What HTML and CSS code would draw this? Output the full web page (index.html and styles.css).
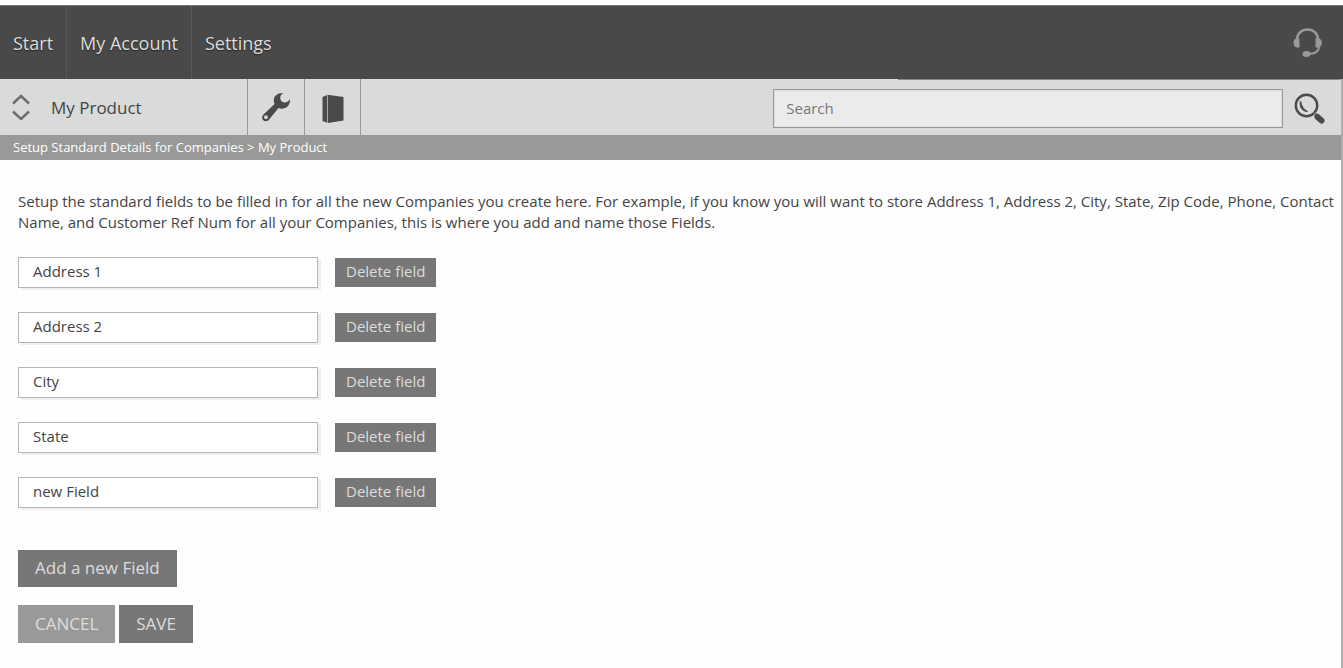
FILE: index.html
```html
<!DOCTYPE html>
<html lang="en">
<head>
    <meta charset="UTF-8">
    <meta name="viewport" content="width=device-width, initial-scale=1.0">
    <title>Setup Standard Details for Companies</title>
    <link rel="stylesheet" href="styles.css">
</head>
<body>
    <header class="top-bar">
        <nav class="main-nav">
            <a href="#start">Start</a>
            <a href="#account">My Account</a>
            <a href="#settings">Settings</a>
        </nav>
        <a href="#support" class="support" aria-label="Support">
            <svg width="30" height="30" viewBox="0 0 30 30" fill="none" stroke="#999">
                <path d="M4 12C4 5 9 1.500 14.500 1.500S25 5 25 12" stroke-width="2.600"/>
                <path d="M3 10.500h3.500v9H4.500C2 19.500.5 17.500.5 15S1.500 11 3 10.500zM26 10.500h-3.500v9h2c2.500 0 4.500-2 4.500-4.500s-1.500-4-3-4.500z" fill="#999" stroke="none"/>
                <path d="M26 18c0 5-2.500 8-11 8" stroke-width="2"/>
                <ellipse cx="13.500" cy="26" rx="4" ry="3" fill="#999" stroke="none"/>
            </svg>
        </a>
    </header>

    <div class="page">
        <div class="toolbar">
            <button type="button" class="product">
                <svg width="18" height="26" viewBox="0 0 18 26" fill="none" stroke="#6d6d6d" stroke-width="2.500">
                    <path d="M1 9.500L9 2l8 7.500M1 17.500L9 25l8-7.500"/>
                </svg>
                My Product
            </button>
            <button type="button" class="tool" aria-label="Tools">
                <svg width="30" height="30" viewBox="0 0 30 30">
                    <path fill="#4a4a4a" fill-rule="evenodd" d="M22.500 1C17 .5 12.500 4 12.800 8.500c0 1.500.3 2.500.8 3.500L2.500 22.500C.5 24.500.8 27 2.300 28.300c1.500 1.400 4 1.300 5.600-.5L17.500 16c3.500 1.500 7 .5 9.500-2 1.500-1.700 2.200-4.500 2-7-1 1.800-2.500 3.300-4.500 3.500-3 .2-5.300-1.700-5.300-4.500 0-2.200 1.300-4.200 3.300-5zM5 23.300a1.900 1.900 0 1 1 0 3.800 1.900 1.900 0 0 1 0-3.800z"/>
                </svg>
            </button>
            <button type="button" class="tool book" aria-label="Products">
                <svg width="22" height="30" viewBox="0 0 22 30">
                    <path fill="#4a4a4a" d="M.5 3L5.500.8 21.500 3v23.500L6 29 .5 27z"/>
                    <path fill="none" stroke="#aaa" d="M5.500 1v28"/>
                </svg>
            </button>
            <form class="search">
                <input type="text" placeholder="Search" aria-label="Search">
                <button type="submit" aria-label="Search">
                    <svg width="32" height="32" viewBox="0 0 32 32" fill="none" stroke="#4a4a4a">
                        <circle cx="13.500" cy="13.500" r="10.700" stroke-width="2.400"/>
                        <path d="M7.500 9C6 14.500 9 19.500 14.500 19.500 10.500 17.500 8.500 14 7.500 9z" fill="#4a4a4a" stroke-width="1"/>
                        <path d="M21 21l2.500 2.500" stroke-width="3" stroke="#777"/>
                        <path d="M24.500 25l4 3.500" stroke-width="6" stroke-linecap="round"/>
                    </svg>
                </button>
            </form>
        </div>
        <div class="breadcrumb">Setup Standard Details for Companies &gt; My Product</div>

        <main class="content">
            <p>Setup the standard fields to be filled in for all the new Companies you create here. For example, if you know you will want to store Address 1, Address 2, City, State, Zip Code, Phone, Contact Name, and Customer Ref Num for all your Companies, this is where you add and name those Fields.</p>

            <form>
                <div class="fields">
                    <div class="field">
                        <input type="text" value="Address 1" aria-label="Field 1">
                        <button type="button">Delete field</button>
                    </div>
                    <div class="field">
                        <input type="text" value="Address 2" aria-label="Field 2">
                        <button type="button">Delete field</button>
                    </div>
                    <div class="field">
                        <input type="text" value="City" aria-label="Field 3">
                        <button type="button">Delete field</button>
                    </div>
                    <div class="field">
                        <input type="text" value="State" aria-label="Field 4">
                        <button type="button">Delete field</button>
                    </div>
                    <div class="field">
                        <input type="text" value="new Field" aria-label="Field 5">
                        <button type="button">Delete field</button>
                    </div>
                </div>
                <button type="button" class="btn">Add a new Field</button>
                <div class="actions">
                    <button type="reset" class="btn cancel">CANCEL</button>
                    <button type="submit" class="btn">SAVE</button>
                </div>
            </form>
        </main>
    </div>
</body>
</html>
```
FILE: styles.css
```css
* { box-sizing: border-box; }
body { margin: 0; padding-top: 5px; min-height: 100vh; font-family: "Open Sans", "Noto Sans", sans-serif; font-size: 15px; color: #444; background-color: #fefefe; }
button, input { font: inherit; color: inherit; margin: 0; border-radius: 0; }
button { border: none; cursor: pointer; white-space: nowrap; }
svg { display: block; }

.top-bar { display: flex; align-items: center; justify-content: space-between; height: 74px; padding-right: 20px; background-color: #494949; border-top: 1px solid #777; }
.main-nav { display: flex; height: 100%; }
.main-nav a { display: flex; align-items: center; padding: 0 13px; color: #ddd; font-size: 18px; text-decoration: none; text-shadow: 0 1px 1px #222; border-right: 1px solid #5a5a5a; }
.main-nav a:last-child { border-right: none; }

.page { border-right: 2px solid #aeacac; }
.toolbar { display: flex; height: 56px; background: linear-gradient(#888, #888) right top / 33% 1px no-repeat #d9dbda; }
.product { display: flex; align-items: center; gap: 21px; width: 248px; padding: 0 12px; font-size: 17px; background: none; border-right: 1px solid #999; }
.tool { display: flex; align-items: center; justify-content: center; width: 57px; padding: 0; background: none; border-right: 1px solid #999; }
.book { width: 56px; padding-top: 4px; }
.search { display: flex; align-items: center; gap: 10px; flex: 1; justify-content: flex-end; padding: 2px 16px 0 20px; }
.search input { width: 54%; height: 39px; padding: 0 12px; background-color: #ebebeb; border: 1px solid #999; box-shadow: inset 0 0 0 1px #ddd; }
.search input::placeholder { color: #777; }
.search button { padding: 0; background: none; }
.breadcrumb { height: 25px; padding: 0 13px; font-size: 13px; line-height: 25px; color: #fff; background-color: #999; }

.content { padding: 31px 0 25px 18px; }
.content p { margin: 0 0 24px; line-height: 21px; }
.fields { display: grid; gap: 24px; margin-bottom: 42px; }
.field { display: flex; align-items: center; gap: 17px; }
.field input { width: 300px; height: 31px; padding: 0 14px 4px; background-color: #fff; border: 1px solid #b5b5b5; box-shadow: 3px 2px 0 #eee; }
.field button { height: 29px; padding: 0 11px 4px; color: #ddd; background-color: #777; }
.btn { height: 37px; padding: 0 17px 2px; font-size: 17px; color: #ddd; background-color: #777; }
.actions { display: flex; gap: 4px; margin-top: 18px; }
.actions .btn { height: 38px; }
.cancel { background-color: #999; }
```
